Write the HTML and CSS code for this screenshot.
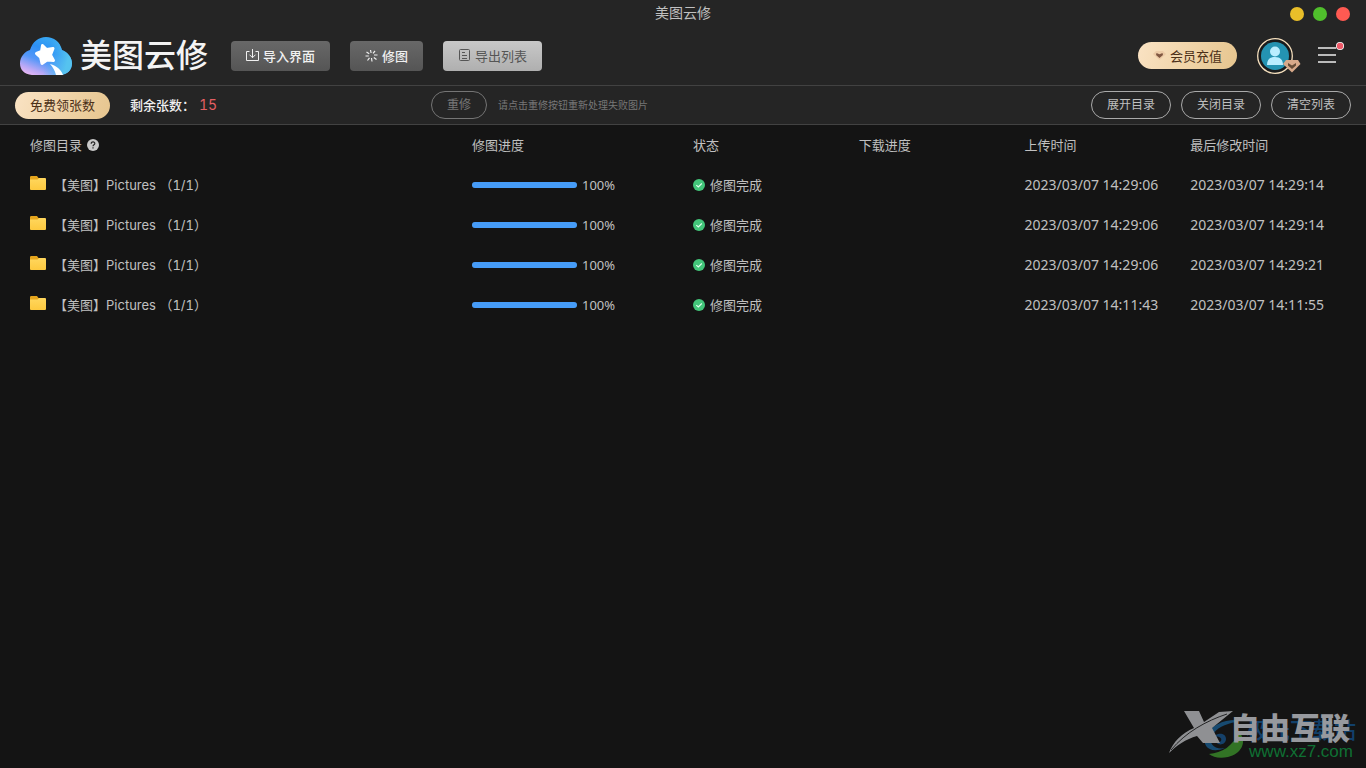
FILE: index.html
```html
<!DOCTYPE html>
<html lang="zh-CN">
<head>
<meta charset="utf-8">
<title>美图云修</title>
<link rel="stylesheet" href="styles.css">
</head>
<body>
<svg class="defs" width="0" height="0" aria-hidden="true">
  <linearGradient id="folderGrad" x1="0" y1="0" x2="0" y2="1"><stop offset="0" stop-color="#ffd75e"/><stop offset="1" stop-color="#fdc93f"/></linearGradient>
  <symbol id="folder" viewBox="0 0 16 14"><path d="M0 1.2Q0 0 1.2 0H7l1.5 2H15v3H0z" fill="#e5a51d"/><path d="M0 3.5h7.5L9 2h6q1 0 1 1v10q0 1-1 1H1q-1 0-1-1z" fill="url(#folderGrad)"/></symbol>
  <symbol id="done" viewBox="0 0 12 12"><circle cx="6" cy="6" r="6" fill="#43c67a"/><path d="M3.3 6.1l2 1.9 3.5-3.5" fill="none" stroke="#e4fff0" stroke-width="1.1"/></symbol>
</svg>
<header class="titlebar">
  <h1 class="window-title">美图云修</h1>
  <div class="window-controls">
    <button class="dot minimize" aria-label="最小化"></button>
    <button class="dot maximize" aria-label="最大化"></button>
    <button class="dot close" aria-label="关闭"></button>
  </div>
</header>
<nav class="navbar">
  <div class="brand">
    <svg class="brand-logo" width="52" height="38" viewBox="0 0 52 38" aria-hidden="true">
      <defs>
        <linearGradient id="cloud" x1="0.1" y1="1" x2="0.6" y2="0.1"><stop offset="0" stop-color="#f3b9f3"/><stop offset="0.2" stop-color="#b7a8f6"/><stop offset="0.45" stop-color="#5597f8"/><stop offset="0.75" stop-color="#2d90f5"/><stop offset="1" stop-color="#37a5f3"/></linearGradient>
        <linearGradient id="cloudEdge" x1="0" y1="0" x2="1" y2="0.2"><stop offset="0.6" stop-color="#4bb8f2" stop-opacity="0"/><stop offset="1" stop-color="#55c3ef"/></linearGradient>
      </defs>
      <path d="M12 38C4 37.500 0 32.500 0 26.500C0 20 4.500 14.500 10 13C12.500 5 18.500 0 26 0C34 0 40 5 42 13C48 15.500 52 20.500 52 26.500C52 33 47 38 40 38Z" fill="url(#cloud)"/>
      <path d="M12 38C4 37.500 0 32.500 0 26.500C0 20 4.500 14.500 10 13C12.500 5 18.500 0 26 0C34 0 40 5 42 13C48 15.500 52 20.500 52 26.500C52 33 47 38 40 38Z" fill="url(#cloudEdge)"/>
      <path d="M22.500 8.500L26.500 12.500L33 11.500L30.500 18L33.500 23.500L27 23L22 26.500L20.500 20L16.500 16.500L21.500 14.500Z" fill="#fff" stroke="#fff" stroke-width="3" stroke-linejoin="round"/>
      <path d="M30 27C37 29 41 32.500 43 38H36C35 34 33 30 30 27Z" fill="#fff"/>
    </svg>
    <span class="brand-name">美图云修</span>
  </div>
  <div class="nav-actions">
    <button class="nav-button">
      <svg width="13" height="13" viewBox="0 0 13 13" fill="none" stroke="currentColor"><path d="M3.500 2.500H.5v9h12v-9h-3M6.500 0v8.500M3.500 5.700l3 3 3-3"/></svg>导入界面
    </button>
    <button class="nav-button">
      <svg width="13" height="13" viewBox="0 0 13 13" fill="none" stroke="currentColor" stroke-width="1.200"><path d="M5.500 1l.6 3M10 2L8 4.300M12.500 6H9M11.500 10.500L8.800 8.500M7 12.500L6.500 9M2.500 11.500l2-2.700M.5 7h3.300M1.500 3l2.700 1.700"/></svg>修图
    </button>
    <button class="nav-button light">
      <svg width="13" height="13" viewBox="0 0 13 13" fill="none" stroke="currentColor"><rect x="1.500" y=".5" width="10" height="11" rx="1"/><path d="M4 3.500h3M4 6.500h5M4 9.500h5"/></svg>导出列表
    </button>
  </div>
  <div class="account">
    <button class="gold recharge">
      <svg width="13" height="13" viewBox="0 0 13 13" aria-hidden="true"><path d="M3 2h7l3 3-6.500 6L0 5z" fill="#eccba6"/><path d="M3.500 4l3 1.200 3-1.200.5 2-3.500 3L3 6z" fill="#805842"/></svg>会员充值
    </button>
    <button class="avatar" aria-label="账户">
      <svg width="44" height="38" viewBox="0 0 44 38" aria-hidden="true">
        <circle cx="18" cy="19" r="17.300" fill="#191b1c" stroke="#f5dfbd" stroke-width="1.300"/>
        <circle cx="18" cy="19" r="14" fill="#2493b2"/>
        <circle cx="18" cy="14.500" r="5" fill="#b9edff"/>
        <path d="M10 28c0-5 2.500-8 8-8s8 3 8 8z" fill="#b9edff"/>
        <path d="M29 23h12l2.500 4-8.500 8.500L26 27z" fill="#d8a98a"/>
        <path d="M31 26l4 2.500 4-2.500v2.500l-4 3.500-4-3.500z" fill="#654b36"/>
      </svg>
    </button>
    <button class="menu" aria-label="菜单">
      <svg width="28" height="28" viewBox="0 0 28 28" aria-hidden="true"><path d="M1 6h18M1 13h18M1 20h18" stroke="#bbb" stroke-width="2"/><circle cx="23" cy="4" r="4" fill="#fff"/><circle cx="23" cy="4" r="3.200" fill="#ee5968"/></svg>
    </button>
  </div>
</nav>
<section class="toolbar">
  <div class="quota">
    <button class="gold">免费领张数</button>
    <span class="remaining">剩余张数：<span class="count">15</span></span>
  </div>
  <div class="retry">
    <button class="pill muted" disabled>重修</button>
    <span class="hint">请点击重修按钮重新处理失败图片</span>
  </div>
  <div class="list-actions">
    <button class="pill">展开目录</button>
    <button class="pill">关闭目录</button>
    <button class="pill">清空列表</button>
  </div>
</section>
<main class="content">
  <table class="tasks">
    <colgroup><col class="col-name"><col class="col-progress"><col><col><col><col></colgroup>
    <thead>
      <tr><th><span class="cell">修图目录<svg class="help" width="12" height="12" viewBox="0 0 12 12" aria-hidden="true"><circle cx="6" cy="6" r="6" fill="#c8c8c8"/><path d="M4.200 4.700C4.200 2.200 8 2.400 7.800 4.700C7.700 5.800 6 5.900 6 7.300M6 8.300v1.200" fill="none" stroke="#222" stroke-width="1.200"/></svg></span></th><th>修图进度</th><th>状态</th><th>下载进度</th><th>上传时间</th><th>最后修改时间</th></tr>
    </thead>
    <tbody>
      <tr><td><span class="cell"><svg class="folder" width="16" height="14"><use href="#folder"/></svg>【美图】Pictures （1/1）</span></td><td><span class="cell"><span class="bar"><span class="fill" style="width:100%"></span></span><span class="percent">100%</span></span></td><td><span class="cell status"><svg width="12" height="12"><use href="#done"/></svg>修图完成</span></td><td></td><td class="date">2023/03/07 14:29:06</td><td class="date">2023/03/07 14:29:14</td></tr>
      <tr><td><span class="cell"><svg class="folder" width="16" height="14"><use href="#folder"/></svg>【美图】Pictures （1/1）</span></td><td><span class="cell"><span class="bar"><span class="fill" style="width:100%"></span></span><span class="percent">100%</span></span></td><td><span class="cell status"><svg width="12" height="12"><use href="#done"/></svg>修图完成</span></td><td></td><td class="date">2023/03/07 14:29:06</td><td class="date">2023/03/07 14:29:14</td></tr>
      <tr><td><span class="cell"><svg class="folder" width="16" height="14"><use href="#folder"/></svg>【美图】Pictures （1/1）</span></td><td><span class="cell"><span class="bar"><span class="fill" style="width:100%"></span></span><span class="percent">100%</span></span></td><td><span class="cell status"><svg width="12" height="12"><use href="#done"/></svg>修图完成</span></td><td></td><td class="date">2023/03/07 14:29:06</td><td class="date">2023/03/07 14:29:21</td></tr>
      <tr><td><span class="cell"><svg class="folder" width="16" height="14"><use href="#folder"/></svg>【美图】Pictures （1/1）</span></td><td><span class="cell"><span class="bar"><span class="fill" style="width:100%"></span></span><span class="percent">100%</span></span></td><td><span class="cell status"><svg width="12" height="12"><use href="#done"/></svg>修图完成</span></td><td></td><td class="date">2023/03/07 14:11:43</td><td class="date">2023/03/07 14:11:55</td></tr>
    </tbody>
  </table>
</main>
<div class="watermark">
  <svg class="mark" width="90" height="60" viewBox="0 0 90 60" aria-hidden="true">
    <path d="M68 16C54 16 43 22 38 31C33 43 43 50 57 44C47 46 40 40 44 32C48 24 57 20 68 18z" fill="#174a70"/>
    <path d="M45 35C47 28 58 28 58 35C58 41 50 42 48 38C52 40 56 35 51 33C48 32 46 33 45 35z" fill="#15416a"/>
    <path d="M41 50C54 49 65 42 71 28C80 38 73 50 60 53C51 55 45 53 41 50z" fill="#327325"/>
    <path d="M16 7H31L36 18L51 8L65 7L44 24L52 39H35L29 32C18 35 8 42 1 49C5 38 14 29 26 24z" fill="#8f9093"/>
    <path d="M3 46C18 28 38 17 59 10" fill="none" stroke="#242526" stroke-width="1"/>
  </svg>
  <span class="site-back">极光下载站</span>
  <span class="site-front">自由互联</span>
  <span class="site-url">www.xz7.com</span>
</div>
</body>
</html>
```
FILE: styles.css
```css
* { box-sizing: border-box; }
body {
  margin: 0;
  min-height: 100vh;
  position: relative;
  display: flex;
  flex-direction: column;
  background: #141414;
  color: #c0c0c0;
  font: 13px/20px Inter, "Noto Sans CJK SC", sans-serif;
  font-variant-numeric: tabular-nums;
}
button {
  margin: 0;
  border: 0;
  font: inherit;
  color: inherit;
  background: none;
  white-space: nowrap;
  display: flex;
  align-items: center;
  justify-content: center;
}
svg { flex: none; display: block; }
.defs { position: absolute; }
.titlebar {
  display: grid;
  grid-template-columns: 1fr auto 1fr;
  align-items: center;
  height: 26px;
  padding: 0 16px;
  background: #252525;
}
.window-title { grid-column: 2; margin: 0; font-size: 14px; font-weight: 400; }
.window-controls { justify-self: end; display: flex; gap: 9px; padding-top: 2px; }
.dot { width: 14px; height: 14px; padding: 0; border-radius: 50%; }
.minimize { background: #e9be29; }
.maximize { background: #50bf2c; }
.close { background: #ff5a52; }
.navbar {
  display: flex;
  align-items: center;
  height: 60px;
  padding: 0 20px;
  background: #252525;
  border-bottom: 1px solid #424242;
}
.brand { display: flex; align-items: center; gap: 8px; }
.brand-name { color: #f4f4f4; font-size: 32px; line-height: 40px; font-weight: 500; }
.nav-actions { display: flex; gap: 20px; margin-left: 23px; }
.nav-button {
  gap: 4px;
  height: 30px;
  padding: 0 15px;
  border-radius: 4px;
  background: linear-gradient(#686868, #555);
  color: #f0f0f0;
  font-weight: 500;
}
.nav-button.light { background: linear-gradient(#c8c8c8, #afafaf); color: #555; font-weight: 400; }
.account { display: flex; align-items: center; margin-left: auto; }
.gold {
  height: 27px;
  padding: 0 15px;
  border-radius: 14px;
  background: linear-gradient(110deg, #fae3c4, #e6c58e);
  color: #4c3018;
}
.recharge { gap: 4px; }
.avatar { padding: 0; margin-left: 20px; }
.menu { padding: 0; margin: 0 1px 0 16px; }
.toolbar {
  display: flex;
  align-items: center;
  height: 39px;
  padding: 0 15px;
  background: #252525;
  border-bottom: 1px solid #424242;
}
.quota { display: flex; align-items: center; gap: 20px; width: 416px; }
.remaining { color: #f0f0f0; font-weight: 500; }
.count { margin-left: 4px; color: #e45f63; font-size: 14px; font-weight: 400; }
.retry { display: flex; align-items: center; gap: 11px; }
.hint { color: #777; font-size: 10px; }
.list-actions { display: flex; gap: 10px; margin-left: auto; }
.pill { height: 28px; padding: 0 15px; border: 1px solid #aaa; border-radius: 14px; font-size: 12px; }
.pill.muted { border-color: #757575; color: #777; }
.content { flex: 1; padding: 0 10px 0 30px; }
.tasks { width: 100%; table-layout: fixed; border-collapse: collapse; }
.col-name { width: 33.333%; }
.col-progress { width: 16.667%; }
.tasks th, .tasks td { height: 40px; padding: 0; text-align: left; font-weight: 400; white-space: nowrap; }
.tasks .date { font-family: "Noto Sans", sans-serif; font-size: 14px; }
.cell { display: flex; align-items: center; gap: 5px; }
.folder { margin: 0 3px 4px 0; }
.bar { width: 105px; height: 6px; border-radius: 3px; background: #333; }
.fill { display: block; height: 100%; border-radius: 3px; background: #469cf8; }
.percent { font-family: "Noto Sans", sans-serif; }
.watermark { position: absolute; right: 8px; bottom: 4px; width: 190px; height: 60px; white-space: nowrap; }
.mark, .site-back, .site-front, .site-url { position: absolute; }
.mark { left: 0; top: 0; }
.site-back { right: 2px; top: 12px; color: #12406a; font-size: 22px; line-height: 28px; font-weight: 500; }
.site-front { right: 8px; top: 8px; color: #97999e; font-size: 30px; line-height: 32px; font-weight: 900; }
.site-url { right: 5px; top: 38px; color: #0f7033; font: 17px/20px "Liberation Sans", Arial, sans-serif; }
```
